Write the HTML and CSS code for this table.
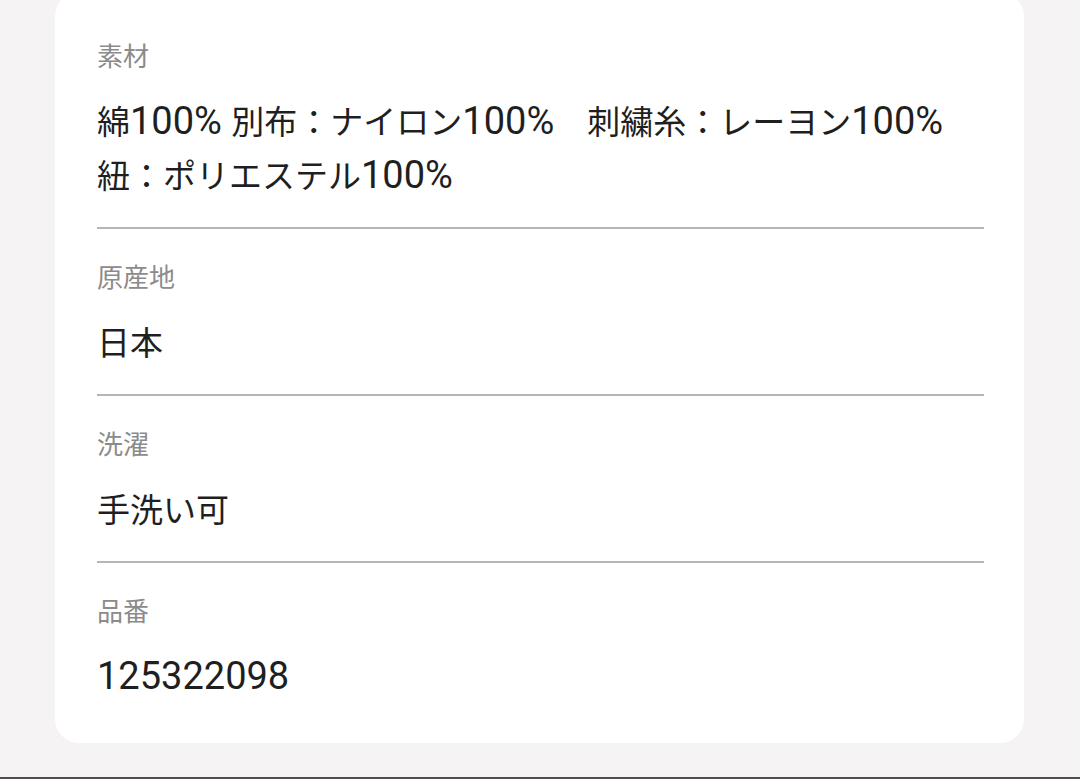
FILE: index.html
```html
<!DOCTYPE html>
<html>
<head>
    <meta charset="utf-8">
    <link rel="stylesheet" href="styles.css">
</head>
<body>
    <div class="page">
        <div class="card">
            <div class="spec">
                <div class="spec-label">素材</div>
                <div class="spec-value">綿<span class="num">100% </span>別布：ナイロン<span class="num">100%</span>　刺繍糸：レーヨン<span class="num">100%</span><br>紐：ポリエステル<span class="num">100%</span></div>
            </div>
            <div class="spec">
                <div class="spec-label">原産地</div>
                <div class="spec-value">日本</div>
            </div>
            <div class="spec">
                <div class="spec-label">洗濯</div>
                <div class="spec-value">手洗い可</div>
            </div>
            <div class="spec last">
                <div class="spec-label">品番</div>
                <div class="spec-value"><span class="num">125322098</span></div>
            </div>
        </div>
    </div>
    <div class="bottom-bar"></div>
</body>
</html>
```
FILE: styles.css
```css
body {
    margin: 0;
    background-color: #f5f3f4;
    font-family: "Noto Sans CJK JP", "Noto Sans", sans-serif;
    height: 779px;
    overflow: hidden;
}

.page {
    padding: 0 56px 0 55px;
    margin-top: -8px;
}

.card {
    background-color: #fff;
    border-radius: 24px;
    padding: 0 40px 15px 42px;
}

.spec {
    padding: 29px 0 26px 0;
    border-bottom: 2px solid #b5b5b5;
}

.spec:first-child {
    padding-top: 45px;
}

.spec.last {
    border-bottom: none;
}

.spec-label {
    font-size: 26px;
    line-height: 36px;
    color: #8b8b8b;
}

.spec-value {
    margin-top: 20px;
    font-size: 33px;
    line-height: 54px;
    color: #1f1f1f;
}

.num {
    font-family: Roboto, "Liberation Sans", sans-serif;
    font-size: 38px;
    line-height: 1;
}

.bottom-bar {
    margin-top: 34px;
    height: 10px;
    border-top: 2px solid #4d4d4d;
    background-color: #f5f3f4;
}
```
